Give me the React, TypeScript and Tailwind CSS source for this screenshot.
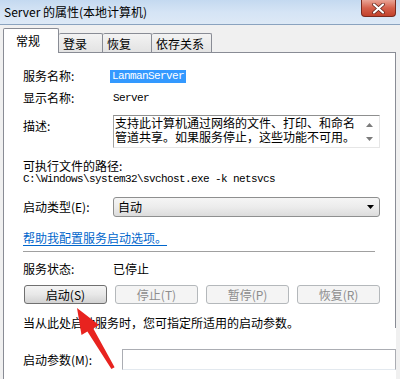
import { FC } from "react"

const cjk = "font-['Noto_Sans_CJK_SC','Noto_Sans',sans-serif]"
const mono = "font-['Liberation_Mono',monospace] text-[11px] tracking-[-0.6px]"

const Tab: FC<{ label: string; width: string; active?: boolean; first?: boolean }> = ({ label, width, active, first }) => (
  <div
    className={
      active
        ? `${width} h-[25px] -mb-px relative z-10 bg-white border-l border-t border-r border-[#898c95] rounded-t-[2px] pl-[12px] pt-[5px] text-[12px] leading-[14px] text-black`
        : `${width} h-[19px] bg-gradient-to-b from-[#f3f3f3] to-[#e3e3e3] border-t border-r ${first ? "border-l" : ""} border-[#898c95] rounded-t-[2px] pl-[4px] pt-[3px] text-[12px] leading-[14px] text-black`
    }
  >
    {label}
  </div>
)

const Btn: FC<{ label: string; enabled?: boolean }> = ({ label, enabled }) => (
  <div
    className={
      enabled
        ? "w-[83px] h-[19px] rounded-[3px] border border-[#707070] bg-gradient-to-b from-[#f4f4f4] via-[#e8e8e8] to-[#d2d2d2] flex items-center justify-center text-[12px] leading-[14px] text-black"
        : "w-[83px] h-[19px] rounded-[3px] border border-[#b4b8bb] bg-[#f4f4f4] flex items-center justify-center text-[12px] leading-[14px] text-[#8d8d8d]"
    }
  >
    {label}
  </div>
)

const App: FC = () => {
  return (
    <div className={`w-[400px] h-[379px] overflow-hidden relative bg-[#f0f0f0] ${cjk}`}>
      {/* title bar */}
      <div className="h-[25px] flex justify-between border-b border-[#8aa3bf] bg-gradient-to-b from-[#c4d9f0] via-[#d5e4f5] to-[#dde9f6]">
        <div className="pl-[4px] pt-[4px] text-[12px] leading-[15px] text-black">Server 的属性(本地计算机)</div>
        <div className="mr-[4px] w-[35px] h-[17px] rounded-b-[4px] border border-t-0 border-[#7a2a1e] bg-gradient-to-b from-[#e9a496] via-[#d5604b] to-[#c2412b] flex items-center justify-center">
          <svg width="13" height="11" viewBox="0 0 13 11">
            <path d="M2 1.5 L11 9.5 M11 1.5 L2 9.5" stroke="#5b1d14" strokeWidth="3.6" strokeLinecap="round" />
            <path d="M2 1.5 L11 9.5 M11 1.5 L2 9.5" stroke="#ffffff" strokeWidth="2.2" strokeLinecap="round" />
          </svg>
        </div>
      </div>

      {/* tabs */}
      <div className="pt-[3px] pl-[3px] h-[27px] flex items-end">
        <Tab label="常规" width="w-[56px]" active />
        <Tab label="登录" width="w-[44px]" />
        <Tab label="恢复" width="w-[49px]" />
        <Tab label="依存关系" width="w-[60px]" />
      </div>

      {/* panel */}
      <div className="ml-[3px] w-[393px] h-[400px] bg-white border-l border-t border-[#898c95]">
        <div className="h-[275px] border-r border-[#898c95] pl-[19px] text-[12px] leading-[14px] text-black">
          <div className="pt-[16px] flex items-center h-[30px]">
            <span className="w-[87px]">服务名称:</span>
            <span className={`${mono} bg-[#3399ff] text-white h-[13px] leading-[13px] px-[2px]`}>LanmanServer</span>
          </div>

          <div className="mt-[8px] flex items-center h-[14px]">
            <span className="w-[90px]">显示名称:</span>
            <span className={mono}>Server</span>
          </div>

          <div className="mt-[10px] flex items-start">
            <span className="w-[90px] mt-[4px]">描述:</span>
            <div className="w-[267px] h-[33px] flex border border-t-[#8e8f8f] border-l-[#a3a3a3] border-r-[#e6e6e6] border-b-[#e6e6e6]">
              <div className="flex-1 pl-[1px] text-[12px] leading-[14px]">
                <div>支持此计算机通过网络的文件、打印、和命名</div>
                <div>管道共享。如果服务停止，这些功能不可用。</div>
              </div>
              <div className="w-[16px] flex flex-col items-center justify-between pt-[7px] pb-[6px] pr-[4px]">
                <svg width="7" height="4" viewBox="0 0 7 4"><path d="M0 4 L3.5 0 L7 4 Z" fill="#7b7b7b" /></svg>
                <svg width="7" height="4" viewBox="0 0 7 4"><path d="M0 0 L7 0 L3.5 4 Z" fill="#7b7b7b" /></svg>
              </div>
            </div>
          </div>

          <div className="mt-[11px] h-[14px]">可执行文件的路径:</div>
          <div className={`${mono} h-[13px] leading-[13px]`}>C:\Windows\system32\svchost.exe -k netsvcs</div>

          <div className="mt-[11px] flex items-center">
            <span className="w-[90px]">启动类型(E):</span>
            <div className="w-[267px] h-[20px] rounded-[3px] border border-[#8e8f8f] bg-gradient-to-b from-[#f5f5f5] via-[#ececec] to-[#dcdcdc] flex items-center justify-between pl-[4px] pr-[5px]">
              <span>自动</span>
              <svg width="7" height="4" viewBox="0 0 7 4"><path d="M0 0 L7 0 L3.5 4 Z" fill="#000" /></svg>
            </div>
          </div>

          <div className="mt-[14px] h-[14px] text-[#0066cc] underline underline-offset-2">帮助我配置服务启动选项。</div>

          <div className="mt-[6px] w-[352px] h-[2px] border-t border-[#a0a0a0] border-b border-b-white" />

          <div className="mt-[9px] flex items-center h-[14px]">
            <span className="w-[90px]">服务状态:</span>
            <span>已停止</span>
          </div>

          <div className="mt-[9px] ml-[1px] flex gap-[8px]">
            <Btn label="启动(S)" enabled />
            <Btn label="停止(T)" />
            <Btn label="暂停(P)" />
            <Btn label="恢复(R)" />
          </div>

          <div className="mt-[13px] h-[12px] leading-[12px]">当从此处启动服务时，您可指定所适用的启动参数。</div>
        </div>

        <div className="pl-[19px] mt-[21px] flex items-center text-[12px] leading-[14px] text-black">
          <span className="w-[109px]">启动参数(M):</span>
          <div className="w-[300px] h-[21px] border border-[#abadb3] border-b-[#e3e9ef] bg-white" />
        </div>
      </div>

      {/* red annotation arrow */}
      <svg className="absolute left-0 top-0 pointer-events-none" width="400" height="379" viewBox="0 0 400 379">
        <polygon
          points="77,308 99,325 93.3,328.4 114.6,367.2 111.4,369 87.4,331.6 81.5,335"
          fill="#e8231f"
        />
      </svg>
    </div>
  )
}

export default App
